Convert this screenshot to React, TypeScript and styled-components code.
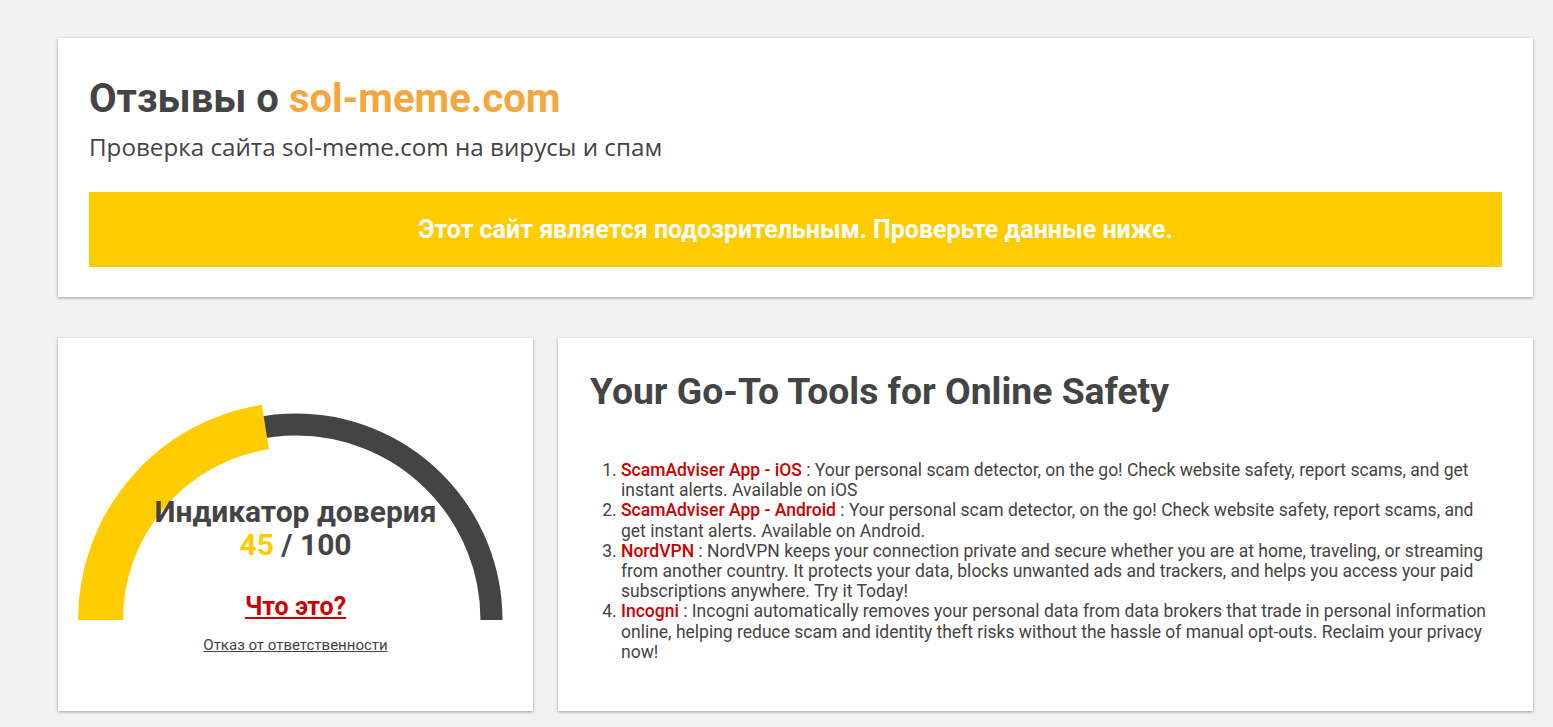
import React from "react";
import styled, { createGlobalStyle } from "styled-components";

const GlobalStyle = createGlobalStyle`
  html, body {
    margin: 0;
    padding: 0;
    background: #f2f2f2;
    font-family: Roboto, "Liberation Sans", Arial, sans-serif;
    color: #444;
  }
`;

const Page = styled.div`
  padding: 38px 20px 16px 58px;
`;

const Card = styled.section`
  background: #fff;
  box-shadow: 0 1px 3px rgba(0, 0, 0, 0.35);
`;

const HeaderCard = styled(Card)`
  padding: 37px 31px 30px 31px;
`;

const Title = styled.h1`
  margin: 0;
  font-size: 40px;
  line-height: 48px;
  font-weight: 700;
  color: #444;
`;

const Domain = styled.span`
  color: #f6a73b;
`;

const Subtitle = styled.p`
  margin: 7px 0 0;
  font-family: "Open Sans", Roboto, sans-serif;
  font-size: 24.2px;
  line-height: 34px;
  color: #444;
`;

const Banner = styled.div`
  margin-top: 28px;
  height: 75px;
  background: #ffcc00;
  color: #fff;
  font-size: 25px;
  font-weight: 700;
  display: flex;
  align-items: center;
  justify-content: center;
`;

const Row = styled.div`
  margin-top: 41px;
  display: grid;
  grid-template-columns: 475px 1fr;
  gap: 25px;
`;

const ScoreCard = styled(Card)`
  height: 373px;
  box-sizing: border-box;
  padding-top: 64px;
  text-align: center;
`;

const Gauge = styled.div`
  position: relative;
  width: 436px;
  height: 218px;
  margin: 0 auto;
  box-sizing: border-box;
  padding-top: 93px;
`;

const GaugeArc = styled.svg`
  position: absolute;
  left: 0;
  top: 0;
`;

const GaugeLabel = styled.div`
  position: relative;
  font-size: 30px;
  line-height: 33px;
  font-weight: 700;
  color: #444;
`;

const Score = styled.span`
  color: #ffcc00;
`;

const WhatLink = styled.a`
  position: relative;
  display: inline-block;
  margin-top: 32px;
  font-size: 25px;
  line-height: 28px;
  font-weight: 700;
  color: #cc0000;
  text-decoration: underline;
`;

const Disclaimer = styled.a`
  display: inline-block;
  margin-top: 16px;
  font-size: 15px;
  line-height: 18px;
  color: #444;
  text-decoration: underline;
`;

const ToolsCard = styled(Card)`
  height: 373px;
  box-sizing: border-box;
  padding: 32px 32px 0 32px;
`;

const ToolsTitle = styled.h2`
  margin: 0;
  font-size: 37.3px;
  line-height: 43px;
  font-weight: 700;
  color: #444;
`;

const ToolList = styled.ol`
  margin: 47px 0 0;
  padding-left: 31px;
  font-size: 17.5px;
  line-height: 20.2px;
  color: #444;
`;

const ToolName = styled.a`
  color: #cc0000;
  font-weight: 500;
  text-decoration: none;
`;

const tools = [
  {
    name: "ScamAdviser App - iOS",
    text: "Your personal scam detector, on the go! Check website safety, report scams, and get instant alerts. Available on iOS",
  },
  {
    name: "ScamAdviser App - Android",
    text: "Your personal scam detector, on the go! Check website safety, report scams, and get instant alerts. Available on Android.",
  },
  {
    name: "NordVPN",
    text: "NordVPN keeps your connection private and secure whether you are at home, traveling, or streaming from another country. It protects your data, blocks unwanted ads and trackers, and helps you access your paid subscriptions anywhere. Try it Today!",
  },
  {
    name: "Incogni",
    text: "Incogni automatically removes your personal data from data brokers that trade in personal information online, helping reduce scam and identity theft risks without the hassle of manual opt-outs. Reclaim your privacy now!",
  },
];

const score = 45;
const R = 195.5;
const C = 218;

const arcEnd = (value: number) => {
  const a = Math.PI - (value / 100) * Math.PI;
  return `${(C + R * Math.cos(a)).toFixed(2)} ${(C - R * Math.sin(a)).toFixed(2)}`;
};

const App = () => {
  return (
    <>
      <GlobalStyle />
      <Page>
        <HeaderCard>
          <Title>
            Отзывы о <Domain>sol-meme.com</Domain>
          </Title>
          <Subtitle>Проверка сайта sol-meme.com на вирусы и спам</Subtitle>
          <Banner>Этот сайт является подозрительным. Проверьте данные ниже.</Banner>
        </HeaderCard>

        <Row>
          <ScoreCard>
            <Gauge>
              <GaugeArc width="436" height="218" viewBox="0 0 436 218">
                <path
                  d={`M ${C - R} ${C} A ${R} ${R} 0 0 1 ${C + R} ${C}`}
                  fill="none"
                  stroke="#444"
                  strokeWidth="22"
                />
                <path
                  d={`M ${C - R} ${C} A ${R} ${R} 0 0 1 ${arcEnd(score)}`}
                  fill="none"
                  stroke="#ffcc00"
                  strokeWidth="45"
                />
              </GaugeArc>
              <GaugeLabel>Индикатор доверия</GaugeLabel>
              <GaugeLabel>
                <Score>{score}</Score> / 100
              </GaugeLabel>
              <WhatLink href="#">Что это?</WhatLink>
            </Gauge>
            <Disclaimer href="#">Отказ от ответственности</Disclaimer>
          </ScoreCard>

          <ToolsCard>
            <ToolsTitle>Your Go-To Tools for Online Safety</ToolsTitle>
            <ToolList>
              {tools.map((t) => (
                <li key={t.name}>
                  <ToolName href="#">{t.name}</ToolName> : {t.text}
                </li>
              ))}
            </ToolList>
          </ToolsCard>
        </Row>
      </Page>
    </>
  );
};

export default App;
